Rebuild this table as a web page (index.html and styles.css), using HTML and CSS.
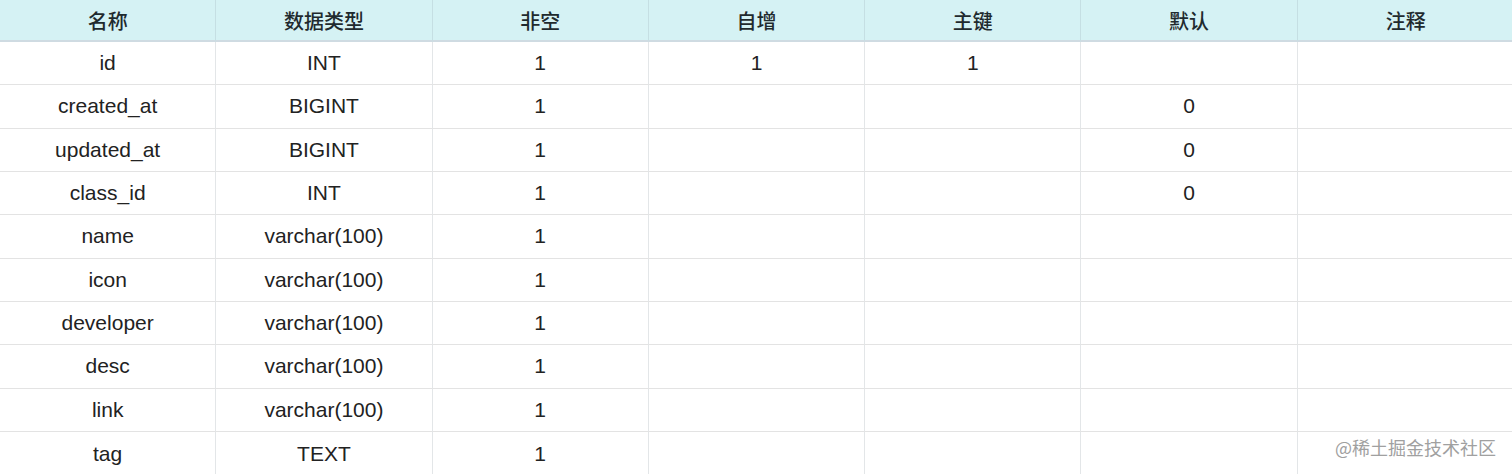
FILE: index.html
```html
<!DOCTYPE html>
<html lang="zh">
<head>
<meta charset="utf-8">
<link rel="stylesheet" href="styles.css">
</head>
<body>
<div class="page">
  <div class="grid">
    <div class="cell head">名称</div><div class="cell head">数据类型</div><div class="cell head">非空</div><div class="cell head">自增</div><div class="cell head">主键</div><div class="cell head">默认</div><div class="cell head">注释</div>

    <div class="cell">id</div><div class="cell">INT</div><div class="cell">1</div><div class="cell">1</div><div class="cell">1</div><div class="cell"></div><div class="cell"></div>
    <div class="cell">created_at</div><div class="cell">BIGINT</div><div class="cell">1</div><div class="cell"></div><div class="cell"></div><div class="cell">0</div><div class="cell"></div>
    <div class="cell">updated_at</div><div class="cell">BIGINT</div><div class="cell">1</div><div class="cell"></div><div class="cell"></div><div class="cell">0</div><div class="cell"></div>
    <div class="cell">class_id</div><div class="cell">INT</div><div class="cell">1</div><div class="cell"></div><div class="cell"></div><div class="cell">0</div><div class="cell"></div>
    <div class="cell">name</div><div class="cell">varchar(100)</div><div class="cell">1</div><div class="cell"></div><div class="cell"></div><div class="cell"></div><div class="cell"></div>
    <div class="cell">icon</div><div class="cell">varchar(100)</div><div class="cell">1</div><div class="cell"></div><div class="cell"></div><div class="cell"></div><div class="cell"></div>
    <div class="cell">developer</div><div class="cell">varchar(100)</div><div class="cell">1</div><div class="cell"></div><div class="cell"></div><div class="cell"></div><div class="cell"></div>
    <div class="cell">desc</div><div class="cell">varchar(100)</div><div class="cell">1</div><div class="cell"></div><div class="cell"></div><div class="cell"></div><div class="cell"></div>
    <div class="cell">link</div><div class="cell">varchar(100)</div><div class="cell">1</div><div class="cell"></div><div class="cell"></div><div class="cell"></div><div class="cell"></div>
    <div class="cell last">tag</div><div class="cell last">TEXT</div><div class="cell last">1</div><div class="cell last"></div><div class="cell last"></div><div class="cell last"></div><div class="cell last"></div>
  </div>
  <div class="watermark">@稀土掘金技术社区</div>
</div>
</body>
</html>
```

FILE: styles.css
```css
html, body {
  margin: 0;
  padding: 0;
  background: #ffffff;
}
.page {
  position: relative;
  width: 1512px;
  height: 474px;
  overflow: hidden;
  font-family: "Liberation Sans", "Noto Sans CJK SC", sans-serif;
  color: #222222;
}
.grid {
  display: grid;
  width: 1514px;
  grid-template-columns: repeat(7, 1fr);
  grid-template-rows: 42px repeat(10, 43.33px);
}
.cell {
  display: flex;
  align-items: center;
  justify-content: center;
  font-size: 21px;
  border-right: 1px solid #e3e6e8;
  border-bottom: 1px solid #e3e3e3;
  box-sizing: border-box;
}
.cell:nth-child(7n) {
  border-right: none;
}
.head {
  background: #d5f2f4;
  font-family: "Noto Sans CJK SC", sans-serif;
  font-weight: 500;
  font-size: 20px;
  color: #1f2a2e;
  border-right-color: #c5dfe3;
  border-bottom: 2px solid #cfdbe2;
}
.last {
  border-bottom: none;
}
.watermark {
  position: absolute;
  right: 16px;
  bottom: 14px;
  font-family: "Noto Sans CJK SC", sans-serif;
  font-size: 18px;
  color: #a0a0a0;
}
```
